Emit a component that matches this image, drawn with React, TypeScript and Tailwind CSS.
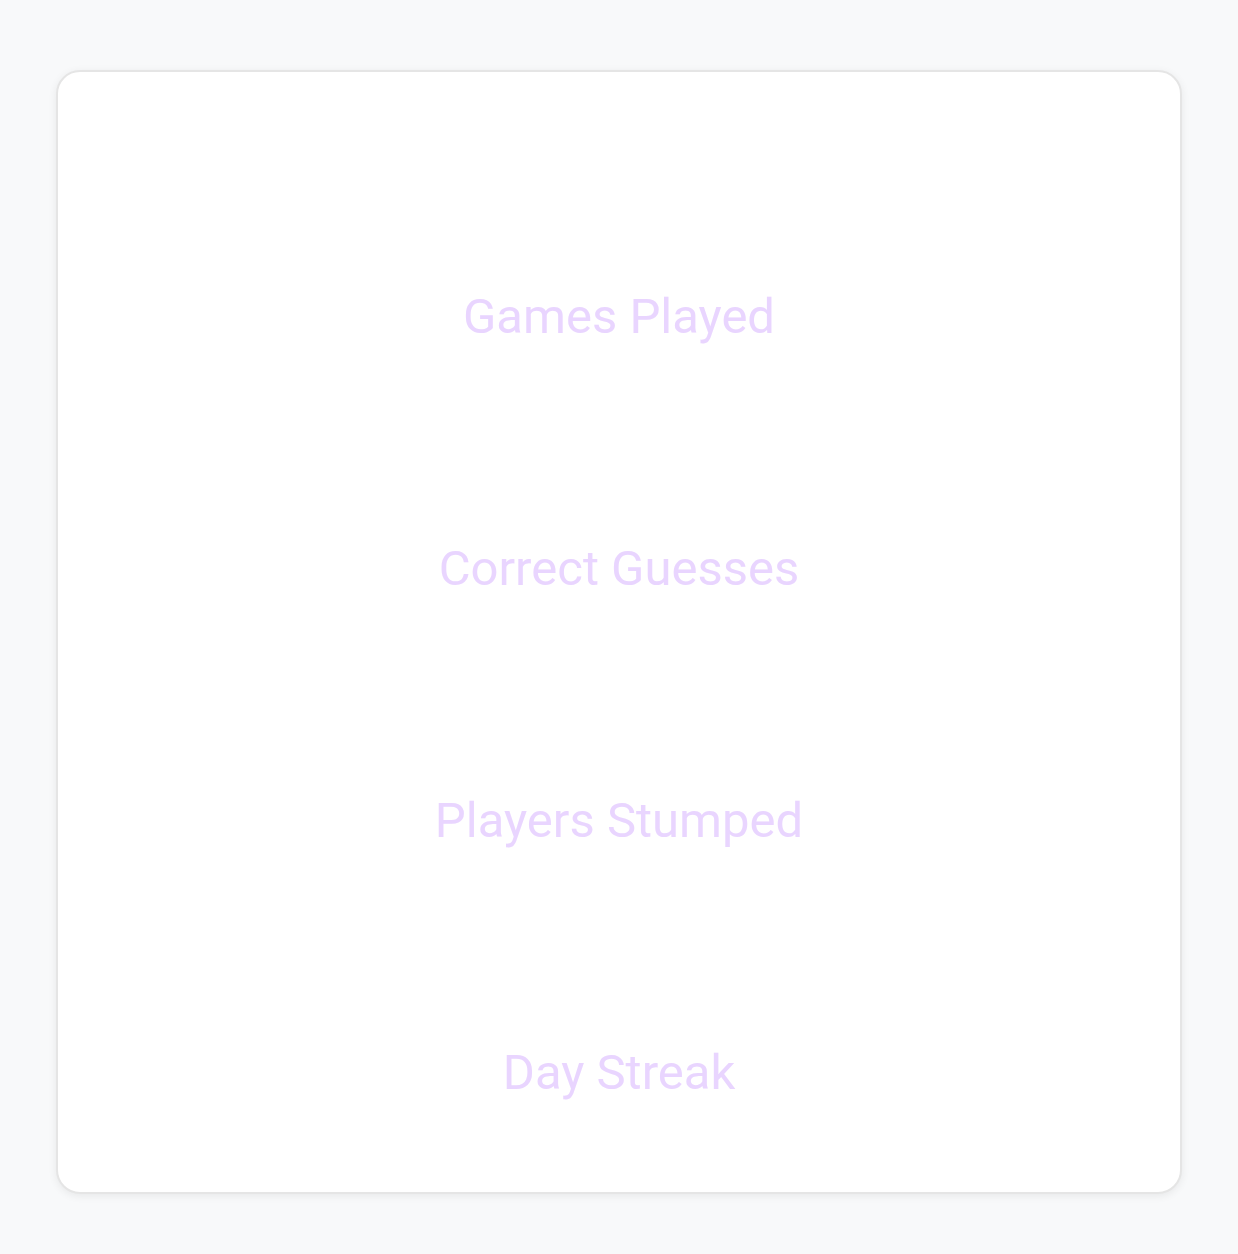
import React from "react";

const stats = ["Games Played", "Correct Guesses", "Players Stumped", "Day Streak"];

function App() {
  return (
    <div
      className="min-h-[1254px] bg-[#f8f9fa] px-14 pt-[70px] pb-[60px]"
      style={{ fontFamily: "Roboto, 'Noto Sans', sans-serif" }}
    >
      <div className="rounded-[24px] border-2 border-[#e5e5e5] bg-white pt-[57px] pb-[55px] shadow-[0_2px_8px_rgba(0,0,0,0.07)]">
        {stats.map((label) => (
          <div key={label} className="flex h-[252px] flex-col items-center">
            {/* value placeholder */}
            <div className="h-[160px]" />
            <div className="text-[49px] leading-[56px] text-[#e9d5ff]">{label}</div>
          </div>
        ))}
      </div>
    </div>
  );
}

export default App;
